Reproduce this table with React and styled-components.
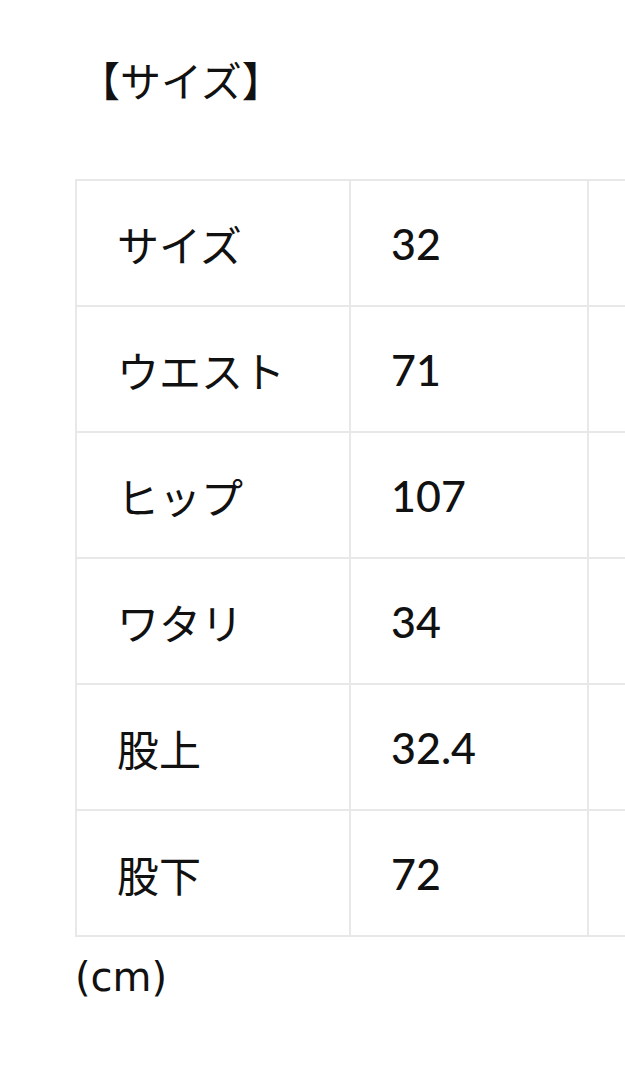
import styled, { createGlobalStyle } from "styled-components";

const GlobalStyle = createGlobalStyle`
  html, body {
    margin: 0;
    padding: 0;
    background: #fff;
    overflow-x: hidden;
  }
  body {
    font-family: "Lato", "Noto Sans CJK JP", sans-serif;
    color: #111;
  }
`;

const Page = styled.div`
  padding: 53px 0 0 75px;
  width: 900px;
`;

const Heading = styled.h2`
  margin: 0 0 74px 0;
  font-size: 41px;
  font-weight: 400;
  line-height: 52px;
  font-family: "Noto Sans CJK JP", sans-serif;
  text-indent: 4px;
`;

const Table = styled.table`
  border-collapse: collapse;
  table-layout: fixed;
  width: 752px;
`;

const Cell = styled.td`
  border: 2px solid #e8e8e8;
  height: 124px;
  padding: 0 0 0 40px;
  font-size: ${(p) => (p.$label ? "42px" : "43px")};
  font-family: ${(p) =>
    p.$label ? `"Noto Sans CJK JP", sans-serif` : `"Lato", "Noto Sans CJK JP", sans-serif`};
  font-weight: ${(p) => (p.$label ? 400 : 500)};
  vertical-align: middle;
  white-space: nowrap;
`;

const Unit = styled.div`
  margin-top: 16px;
  font-size: 40px;
  line-height: 48px;
  font-family: "DejaVu Sans", sans-serif;
`;

const rows = [
  ["サイズ", "32"],
  ["ウエスト", "71"],
  ["ヒップ", "107"],
  ["ワタリ", "34"],
  ["股上", "32.4"],
  ["股下", "72"],
];

function App() {
  return (
    <>
      <GlobalStyle />
      <Page>
        <Heading>【サイズ】</Heading>
        <Table>
          <colgroup>
            <col style={{ width: 274 }} />
            <col style={{ width: 238 }} />
            <col style={{ width: 240 }} />
          </colgroup>
          <tbody>
            {rows.map(([label, value]) => (
              <tr key={label}>
                <Cell $label>{label}</Cell>
                <Cell>{value}</Cell>
                <Cell />
              </tr>
            ))}
          </tbody>
        </Table>
        <Unit>(cm)</Unit>
      </Page>
    </>
  );
}

export default App;
